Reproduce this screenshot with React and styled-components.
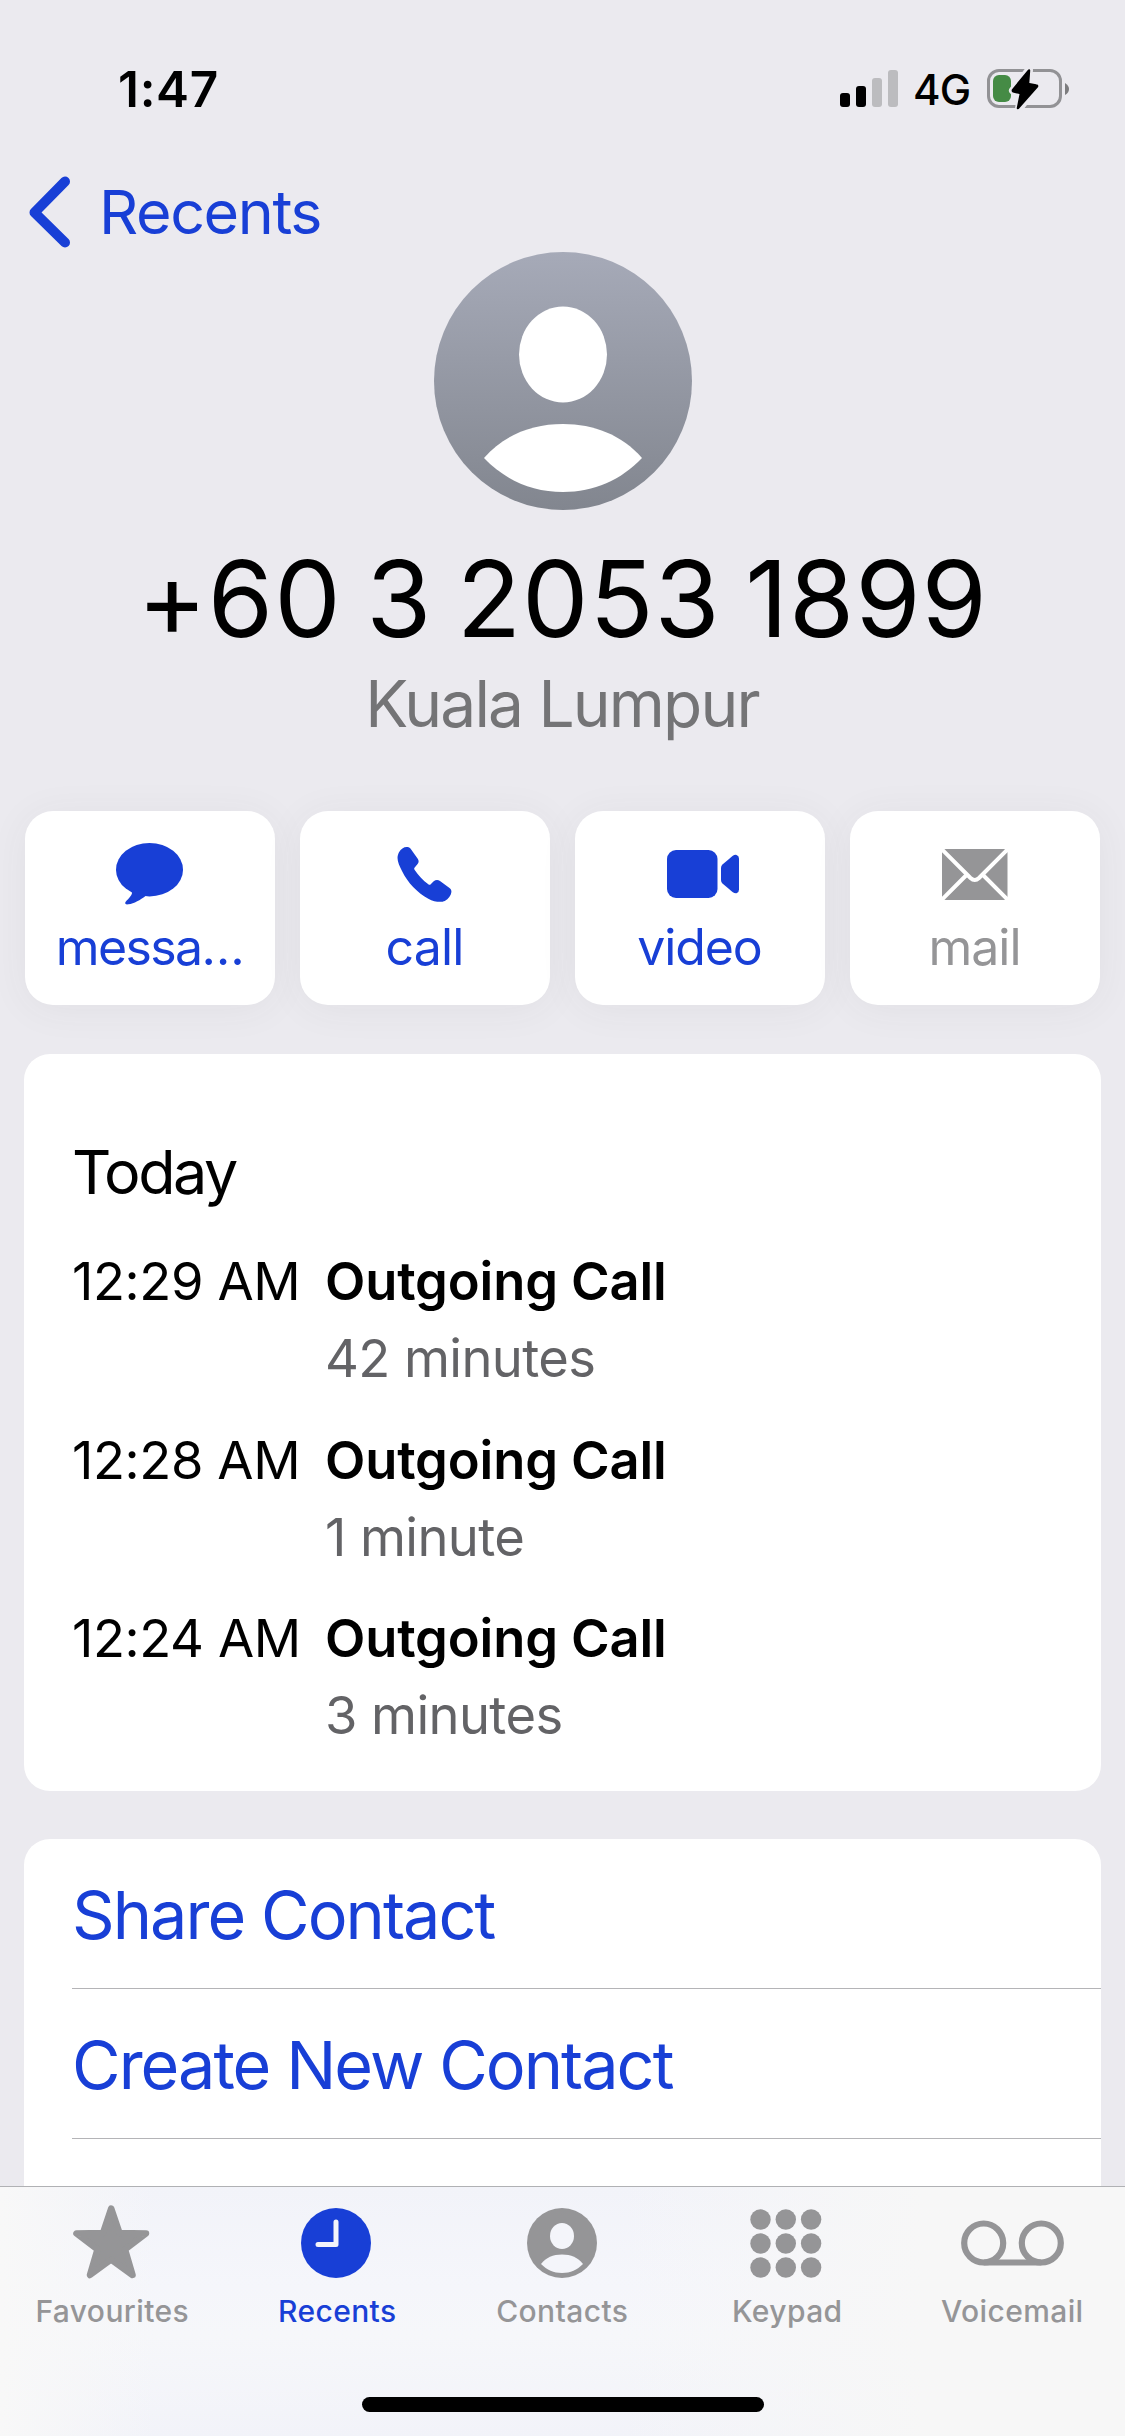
import React from "react";
import styled, { createGlobalStyle } from "styled-components";

const BLUE = "#183fd6";
const GREY = "#959597";

const GlobalStyle = createGlobalStyle`
  *, *::before, *::after { box-sizing: border-box; }
  body {
    margin: 0;
    background: #ebeaef;
    font-family: Inter, "Liberation Sans", sans-serif;
    color: #000;
  }
`;

const Screen = styled.div`
  width: 1125px;
  height: 2436px;
  display: flex;
  flex-direction: column;
  overflow: hidden;
  background: #ebeaef;
  white-space: nowrap;
`;

const StatusBar = styled.header`
  height: 178px;
  flex: none;
  display: flex;
  align-items: center;
  justify-content: space-between;
  padding: 0 56px 0 118px;
`;

const Clock = styled.span`
  font-size: 49.5px;
  font-weight: 600;
  letter-spacing: 0.7px;
`;

const StatusIcons = styled.div`
  display: flex;
  align-items: center;
`;

const Network = styled.span`
  width: 87px;
  padding-left: 13px;
  font-size: 42px;
  font-weight: 500;
  line-height: 60px;
  letter-spacing: -0.8px;
  padding-top: 2px;
`;

const NavBar = styled.nav`
  height: 68px;
  flex: none;
  display: flex;
  align-items: center;
  gap: 27px;
  padding-left: 28px;
  color: ${BLUE};
  font-size: 61px;
  letter-spacing: -1.4px;
  line-height: 68px;
`;

const Content = styled.main`
  flex: 1;
  min-height: 0;
  overflow: hidden;
  display: flex;
  flex-direction: column;
  padding: 6px 24px 0;
`;

const Profile = styled.section`
  display: flex;
  flex-direction: column;
  align-items: center;
`;

const PhoneNumber = styled.h1`
  margin: 25px 0 0;
  font-size: 105.5px;
  font-weight: 400;
  line-height: 127px;
  letter-spacing: 0.9px;
  word-spacing: -6px;
`;

const Place = styled.p`
  margin: 0;
  font-size: 64px;
  line-height: 84px;
  letter-spacing: -1.8px;
  padding-right: 1px;
  color: #747476;
`;

const Actions = styled.section`
  display: grid;
  grid-template-columns: repeat(4, 250px);
  gap: 25px;
  margin: 65px 0 0 1px;
  flex: none;
`;

const Action = styled.button`
  height: 194px;
  border: 0;
  border-radius: 28px;
  padding: 28px 0 0;
  display: flex;
  flex-direction: column;
  align-items: center;
  font: inherit;
  color: ${(p) => (p.$muted ? GREY : BLUE)};
  background: #fff;
  box-shadow: 0 4px 40px rgba(60, 60, 60, 0.06);
`;

const ActionIcon = styled.span`
  height: 70px;
  display: flex;
  align-items: center;
  margin-left: ${(p) => p.$nudge}px;
`;

const ActionLabel = styled.span`
  font-size: 50px;
  line-height: 76px;
  padding-right: 1px;
  letter-spacing: ${(p) => p.$tracking}px;
`;

const Card = styled.section`
  flex: none;
  height: ${(p) => p.$height}px;
  margin-top: ${(p) => p.$gap}px;
  border-radius: ${(p) => (p.$open ? "26px 26px 0 0" : "26px")};
  padding-left: 48px;
  background: #fff;
  overflow: hidden;
`;

const DayTitle = styled.h2`
  margin: 78px 0 31px;
  font-size: 61px;
  font-weight: 400;
  line-height: 80px;
  letter-spacing: -2.5px;
`;

const Call = styled.div`
  display: grid;
  grid-template-columns: 253px 1fr;
  font-size: 52.5px;
  line-height: 77px;
  margin-bottom: 24.5px;
`;

const Time = styled.span`
  letter-spacing: -0.4px;
`;

const Kind = styled.span`
  font-weight: 600;
  letter-spacing: -0.15px;
`;

const Duration = styled.span`
  grid-column: 2;
  letter-spacing: -0.6px;
  color: #636366;
`;

const LinkRow = styled.div`
  height: 150px;
  padding-top: 1px;
  border-bottom: 1px solid #b4b4b7;
  color: ${BLUE};
  font-size: 66.5px;
  line-height: 150px;
  letter-spacing: -1.95px;
`;

const TabBar = styled.footer`
  flex: none;
  height: 250px;
  border-top: 1px solid #b0b1b4;
  background:
    linear-gradient(90deg, #f8f8f8 0%, rgba(248, 248, 248, 0) 14%, rgba(247, 247, 247, 0) 55%, #f7f7f7 82%),
    linear-gradient(180deg, #f2f3f9 0%, #f5f6fb 40%, #f6f7fa 60%, #f2f3f9 100%);
  display: flex;
  flex-direction: column;
  align-items: center;
`;

const Tabs = styled.div`
  display: grid;
  grid-template-columns: repeat(5, 225px);
  height: 210px;
`;

const Tab = styled.div`
  display: flex;
  flex-direction: column;
  align-items: center;
  padding: 16px 0.5px 0 0;
  color: ${(p) => (p.$active ? BLUE : GREY)};
`;

const TabIcon = styled.span`
  height: 80px;
  display: flex;
  align-items: center;
  padding-right: ${(p) => p.$inset}px;
  padding-bottom: ${(p) => p.$lift}px;
`;

const TabLabel = styled.span`
  font-size: 30px;
  font-weight: 500;
  line-height: 56px;
  letter-spacing: 0.4px;
`;

const HomeIndicator = styled.div`
  width: 402px;
  height: 15px;
  border-radius: 8px;
  background: #000;
`;

const SignalIcon = () => (
  <svg width="60" height="40" viewBox="0 0 60 40">
    <rect x="0" y="24" width="10" height="14" rx="3" fill="#000" />
    <rect x="16" y="17" width="10" height="21" rx="3" fill="#000" />
    <rect x="32" y="9" width="10" height="29" rx="3" fill="#bcbcbf" />
    <rect x="48" y="1" width="10" height="37" rx="3" fill="#bcbcbf" />
  </svg>
);

const BatteryIcon = () => (
  <svg width="82" height="44" viewBox="0 0 82 44">
    <rect x="1.5" y="3.5" width="72" height="36" rx="10.5" fill="none" stroke="#929295" strokeWidth="3" />
    <rect x="6" y="8" width="18" height="27" rx="6" fill="#458b45" />
    <path d="M78 16 C81 18 82 20 82 22 C82 24 81 26.500 78 28 Z" fill="#7c7c7e" />
    <path
      d="M42 3 L26 23.500 L34.500 25.500 L32 41.500 L49 20.500 L40.500 18 Z"
      fill="#000"
      stroke="#ebeaef"
      strokeWidth="8"
      strokeLinejoin="round"
    />
    <path
      d="M42 3.500 L26 23 Q25.500 24.500 27 24.500 L34 26 L31 41 L50 19.500 Q50.300 18.500 49 18.500 L41 17 Z"
      fill="#000"
      stroke="#000"
      strokeWidth="2.500"
      strokeLinejoin="round"
    />
  </svg>
);

const BackIcon = () => (
  <svg width="44" height="72" viewBox="0 0 44 72" fill="none">
    <path d="M37 5.500 L6.500 36.500 L37 66.500" stroke="currentColor" strokeWidth="10" strokeLinecap="round" strokeLinejoin="round" />
  </svg>
);

const Avatar = () => (
  <svg width="258" height="258" viewBox="0 0 258 258">
    <defs>
      <linearGradient id="avatar" x1="0" y1="0" x2="0" y2="1">
        <stop offset="0" stopColor="#a6aab8" />
        <stop offset="1" stopColor="#82868f" />
      </linearGradient>
    </defs>
    <circle cx="129" cy="129" r="129" fill="url(#avatar)" />
    <ellipse cx="129" cy="102.500" rx="44" ry="48" fill="#fff" />
    <path d="M50 206 C70 183 98 172 129 172 C160 172 188 183 208 206 C187 228 160 240 129 240 C98 240 71 228 50 206 Z" fill="#fff" />
  </svg>
);

const MessageIcon = () => (
  <svg width="67" height="62" viewBox="0 0 67 62" fill="currentColor">
    <ellipse cx="33.500" cy="26.700" rx="33.500" ry="26.700" />
    <path d="M14 47 C17 49 16 51 15 52.500 C13 55.500 11 57 9.500 59 C8.500 60.800 10 61.800 12.500 61.300 C18 60.500 24.500 57 29.500 53 L34 48 Z" />
  </svg>
);

const PhoneIcon = () => (
  <svg width="55" height="55" viewBox="0 0 55 55" fill="currentColor">
    <path d="M2 5.300 C4 2 6.500 0 9.800 0 C11.500 0 12.800 .5 13.800 2 L20.900 12 C22 14 21.800 15.500 20.600 17 L17.500 20.800 C17 21.600 17.100 22.300 17.700 23 C21.500 28.500 26 33.300 31.300 37.300 C32.200 38 33 38.100 33.700 37.300 L36.700 34.300 C38.700 32.600 41 32.600 43 34 L52.500 41 C54 42.200 54.700 43.500 54.300 45.500 C54 48.500 51.500 51.800 47.800 54 C44.500 55.500 37.500 55.200 31.300 51.700 C20 45.500 11 36 5 24 C1.500 17 -1.300 11.500 2 5.300 Z" />
  </svg>
);

const VideoIcon = () => (
  <svg width="72" height="48" viewBox="0 0 72 48" fill="currentColor">
    <rect width="50.500" height="48" rx="9" />
    <path d="M54 18 Q54 15.800 55.500 14.500 L65.500 6 Q67.500 4.600 69.500 4.900 Q72 5.500 72 8.500 V39.500 Q72 42.500 69.500 43.300 Q67.500 43.500 65.500 42 L55.500 33.500 Q54 32.200 54 30 Z" />
  </svg>
);

const MailIcon = () => (
  <svg width="66" height="51" viewBox="0 0 66 51">
    <rect width="65.500" height="51" rx="4" fill="currentColor" />
    <g fill="none" stroke="#fff" strokeWidth="4">
      <path d="M0 .5 L28.500 29 Q32.750 33 37 29 L65.500 .5" />
      <path d="M0 50.500 L24 26.500 M65.500 50.500 L41.500 26.500" />
    </g>
  </svg>
);

const StarIcon = () => (
  <svg width="77" height="74" viewBox="0 0 77 74">
    <path
      d="M38.200 3.500 L46.500 28 L73 28.500 L52 44.500 L59.500 70 L38.200 54.500 L17 70 L24.500 44.500 L3.500 28.500 L30 28 Z"
      fill="currentColor"
      stroke="currentColor"
      strokeWidth="6.500"
      strokeLinejoin="round"
    />
  </svg>
);

const RecentsIcon = () => (
  <svg width="70" height="70" viewBox="0 0 70 70">
    <circle cx="35" cy="35" r="35" fill="currentColor" />
    <path d="M35 14 V36.500 H17" fill="none" stroke="#f3f4fa" strokeWidth="5" strokeLinecap="round" strokeLinejoin="round" />
  </svg>
);

const ContactsIcon = () => (
  <svg width="70" height="70" viewBox="0 0 70 70">
    <circle cx="35" cy="35" r="35" fill="currentColor" />
    <ellipse cx="35" cy="28" rx="12" ry="13" fill="#f4f5fa" />
    <path d="M14 56 C19 49.500 26 46.500 35 46.500 C44 46.500 51 49.500 56 56 C50 62 43.500 65 35 65 C26.500 65 20 62 14 56 Z" fill="#f4f5fa" />
  </svg>
);

const KeypadIcon = () => (
  <svg width="72" height="69" viewBox="0 0 72 69" fill="currentColor">
    {[0, 1, 2].map((row) =>
      [0, 1, 2].map((col) => <circle key={`${row}-${col}`} cx={10.5 + col * 25.3} cy={10.5 + row * 24} r="10.2" />)
    )}
  </svg>
);

const VoicemailIcon = () => (
  <svg width="103" height="46" viewBox="0 0 103 46" fill="none" stroke="currentColor" strokeWidth="6.2">
    <circle cx="22.700" cy="23" r="19.500" />
    <circle cx="80.300" cy="23" r="19.500" />
    <path d="M22.700 42.500 H80.300" />
  </svg>
);

const actions = [
  { label: "messa…", icon: MessageIcon, tracking: -1.6, nudge: -2 },
  { label: "call", icon: PhoneIcon, tracking: -0.8, nudge: -2 },
  { label: "video", icon: VideoIcon, tracking: -1.1, nudge: 6 },
  { label: "mail", icon: MailIcon, tracking: -1, nudge: -1, muted: true },
];

const calls = [
  { time: "12:29 AM", duration: "42 minutes" },
  { time: "12:28 AM", duration: "1 minute" },
  { time: "12:24 AM", duration: "3 minutes" },
];

const tabs = [
  { label: "Favourites", icon: StarIcon, lift: 3 },
  { label: "Recents", icon: RecentsIcon, active: true },
  { label: "Contacts", icon: ContactsIcon, inset: 1 },
  { label: "Keypad", icon: KeypadIcon },
  { label: "Voicemail", icon: VoicemailIcon, inset: 0 },
];

export default function App() {
  return (
    <Screen>
      <GlobalStyle />
      <StatusBar>
        <Clock>1:47</Clock>
        <StatusIcons>
          <SignalIcon />
          <Network>4G</Network>
          <BatteryIcon />
        </StatusIcons>
      </StatusBar>
      <NavBar>
        <BackIcon />
        <span>Recents</span>
      </NavBar>
      <Content>
        <Profile>
          <Avatar />
          <PhoneNumber>+60 3 2053 1899</PhoneNumber>
          <Place>Kuala Lumpur</Place>
        </Profile>
        <Actions>
          {actions.map(({ label, icon: Icon, tracking, nudge, muted }) => (
            <Action key={label} $muted={muted}>
              <ActionIcon $nudge={nudge}>
                <Icon />
              </ActionIcon>
              <ActionLabel $tracking={tracking}>{label}</ActionLabel>
            </Action>
          ))}
        </Actions>
        <Card $height={737} $gap={49}>
          <DayTitle>Today</DayTitle>
          {calls.map(({ time, duration }) => (
            <Call key={time}>
              <Time>{time}</Time>
              <Kind>Outgoing Call</Kind>
              <Duration>{duration}</Duration>
            </Call>
          ))}
        </Card>
        <Card $height={347} $gap={48} $open>
          <LinkRow>Share Contact</LinkRow>
          <LinkRow>Create New Contact</LinkRow>
        </Card>
      </Content>
      <TabBar>
        <Tabs>
          {tabs.map(({ label, icon: Icon, active, lift = 0, inset = 2 }) => (
            <Tab key={label} $active={active}>
              <TabIcon $lift={lift} $inset={inset}>
                <Icon />
              </TabIcon>
              <TabLabel>{label}</TabLabel>
            </Tab>
          ))}
        </Tabs>
        <HomeIndicator />
      </TabBar>
    </Screen>
  );
}
